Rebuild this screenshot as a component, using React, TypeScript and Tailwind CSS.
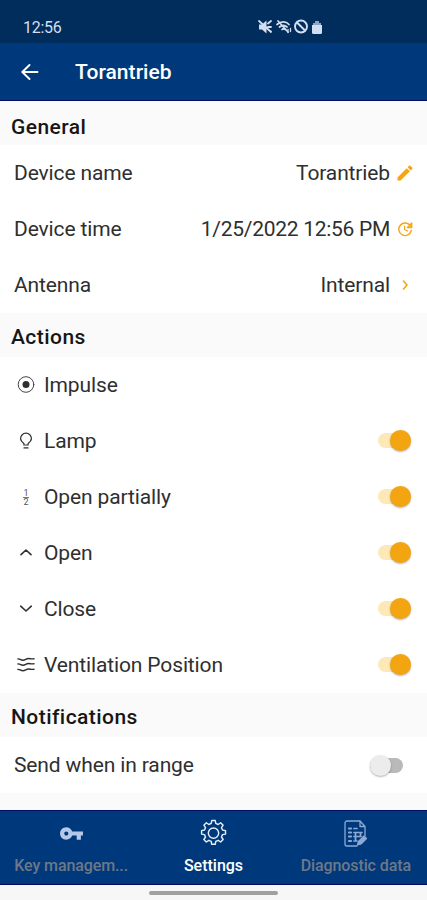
import type { ReactNode } from 'react'
import { clsx } from 'clsx'

const iconProps = {
  fill: 'none',
  stroke: 'currentColor',
  strokeLinecap: 'round' as const,
  strokeLinejoin: 'round' as const,
}

const actions = [
  {
    label: 'Impulse',
    hasSwitch: false,
    icon: (
      <svg width="18" height="18" viewBox="0 0 18 18" {...iconProps} strokeWidth="0.9">
        <circle cx="9" cy="8.500" r="7.800" />
        <circle cx="9" cy="8.500" r="3.500" fill="currentColor" stroke="none" />
      </svg>
    ),
  },
  {
    label: 'Lamp',
    hasSwitch: true,
    icon: (
      <svg width="18" height="18" viewBox="0 0 18 18" {...iconProps} strokeWidth="1.200">
        <path d="M6.900 13v-1.600C4.800 10 3.600 8.600 3.600 6.600a5.400 5.400 0 0 1 10.800 0c0 2-1.200 3.400-3.300 4.800V13Z" />
        <path d="M7 15.900h4" />
      </svg>
    ),
  },
  {
    label: 'Open partially',
    hasSwitch: true,
    icon: (
      <span className="flex flex-col items-center text-[9px] leading-[8px] text-[#555]">
        <span>1</span>
        <span className="h-px w-[6px] bg-[#777]" />
        <span>2</span>
      </span>
    ),
  },
  {
    label: 'Open',
    hasSwitch: true,
    icon: (
      <svg width="18" height="18" viewBox="0 0 18 18" {...iconProps} strokeWidth="1.600">
        <path d="m4 10.700 5-4.700 5 4.700" />
      </svg>
    ),
  },
  {
    label: 'Close',
    hasSwitch: true,
    icon: (
      <svg width="18" height="18" viewBox="0 0 18 18" {...iconProps} strokeWidth="1.600">
        <path d="m3.700 6.200 5.300 4.800 5.300-4.800" />
      </svg>
    ),
  },
  {
    label: 'Ventilation Position',
    hasSwitch: true,
    icon: (
      <svg width="18" height="18" viewBox="0 0 18 18" {...iconProps} strokeWidth="1.400">
        <path d="M1 3c1.500-.6 2.500 1.300 5 1.300 2.500 0 3-1.800 5.500-1.800 2 0 2.500.6 5.500.3" />
        <path d="M1 8c1.500-.6 2.500 1.300 5 1.300 2.500 0 3-1.800 5.500-1.800 2 0 2.500.6 5.500.3" />
        <path d="M1 13.500c1.500-.6 2.500 1.300 5 1.300 2.500 0 3-1.800 5.500-1.800 2 0 2.500.6 5.500.3" />
      </svg>
    ),
  },
]

const tabs = [
  {
    label: 'Key managem...',
    active: false,
    icon: (
      <svg width="25" height="25" viewBox="0 0 24 24" fill="#b4c8e8">
        <path d="M12.650 10C11.830 7.670 9.610 6 7 6c-3.310 0-6 2.690-6 6s2.690 6 6 6c2.610 0 4.830-1.670 5.650-4H17v4h4v-4h2v-4H12.650zM7 14c-1.100 0-2-.9-2-2s.9-2 2-2 2 .9 2 2-.9 2-2 2z" />
      </svg>
    ),
  },
  {
    label: 'Settings',
    active: true,
    icon: (
      <svg width="29" height="29" viewBox="0 0 28 28" {...iconProps} strokeWidth="1.400" className="text-[#e4edfa]">
        <path d="M11.800 4.300 12.300 1.500h3.400l.5 2.800 2.300 1 2.400-1.700 2.400 2.400-1.600 2.400 1 2.300 2.900.5v3.400l-2.900.5-1 2.300 1.600 2.400-2.400 2.400-2.400-1.600-2.300 1-.5 2.800h-3.400l-.5-2.800-2.300-1-2.400 1.600-2.400-2.400 1.600-2.400-1-2.300-2.800-.5v-3.400l2.800-.5 1-2.300L4.700 6l2.400-2.400 2.400 1.700Z" />
        <circle cx="14" cy="13.600" r="5" />
      </svg>
    ),
  },
  {
    label: 'Diagnostic data',
    active: false,
    icon: (
      <svg width="26" height="28" viewBox="0 0 26 28" {...iconProps} strokeWidth="1.300" className="text-[#8ea9d3]">
        <path d="M17 1H4a2 2 0 0 0-2 2v21a2 2 0 0 0 2 2h10M17 1l5 5.500v9M17 1v5.500h5" />
        <path d="M6 8.500h2M6 12.500h2M6 16.500h2M6 21h2" strokeWidth="2.200" />
        <path d="M11 8.500h3M11 12.500h8M11 16.500h7M11 21h3M12.500 12.500v8M17.500 12.500v4" strokeWidth="1.700" />
        <path d="m14.500 25 1-3.500L21 16l2.500 2.500L18 24Z" fill="#8ea9d3" />
      </svg>
    ),
  },
]

function SectionHeader({ title, className }: { title: string; className: string }) {
  return (
    <h2 className={clsx('flex shrink-0 items-center bg-[#fafafa] pl-[11px] text-[21px] font-medium tracking-[0.45px] text-[#161616]', className)}>
      {title}
    </h2>
  )
}

function Row({ children }: { children: ReactNode }) {
  return <div className="flex h-14 shrink-0 items-center bg-white pl-[14px] text-[21px] tracking-[-0.13px] text-[#2f2f2f]">{children}</div>
}

function ValueRow({ label, value, valueClass, icon }: { label: string; value: string; valueClass?: string; icon: ReactNode }) {
  return (
    <Row>
      <span className="pt-px">{label}</span>
      <span className={clsx('ml-auto pt-px', valueClass)}>{value}</span>
      <span className="mr-[12px] ml-[5px] flex w-5 justify-center pb-px text-[#f4a50f]">{icon}</span>
    </Row>
  )
}

function Switch({ on, label }: { on: boolean; label: string }) {
  return (
    <button
      role="switch"
      aria-checked={on}
      aria-label={label}
      className={clsx('ml-auto flex w-[33px] items-center', on ? 'mr-[16px] mb-[2px]' : 'mr-[24px]')}
    >
      <span className={clsx('flex h-[15px] w-[33px] items-center rounded-full', on ? 'justify-end bg-[#fde9b8]' : 'justify-start bg-[#b9b9b9]')}>
        <span className={clsx('size-[21px] shrink-0 rounded-full shadow-[0_1px_2px_rgba(0,0,0,0.3)]', on ? 'bg-[#f2a411]' : 'bg-[#ececec]')} />
      </span>
    </button>
  )
}

export default function App() {
  return (
    <div className="flex h-[900px] w-[427px] flex-col overflow-hidden bg-[#fafafa] font-[Roboto,sans-serif]">
      {/* Status bar */}
      <div className="flex h-[43px] shrink-0 items-center bg-[#002d5c] pt-[11px] pl-[23px] text-[#d3def0]">
        <span className="w-[235px] pt-px text-[16px] tracking-[-0.3px]">12:56</span>
        <svg width="66" height="16" viewBox="0 0 66 16" {...iconProps}>
          <path d="M1 5.500h3l4.500-4v13L4 10.500H1Z" fill="currentColor" stroke="none" />
          <path d="m1 2 12 11M10 4.500l3-2.500M10 8h3M10.500 11l2.500 1.500" strokeWidth="1.800" />
          <path d="M19 5.500c4-3.500 9-3.500 12 0M21.500 8c2.500-2 5-2 7.500 0M24 10.500c1-1 2-1 3 0M20 2l10 11" strokeWidth="1.700" />
          <path d="M30 10.500v3M32.500 9.500v3" strokeWidth="1.300" />
          <circle cx="43" cy="7.500" r="6" strokeWidth="1.900" />
          <path d="m39 3.500 8 8" strokeWidth="1.900" />
          <path d="M57 2h4v2h2v2h-8V4h2Z" fill="#8da3c0" stroke="none" />
          <path d="M54 6h10v7.500a1.500 1.500 0 0 1-1.500 1.500h-7a1.500 1.500 0 0 1-1.500-1.500Z" fill="currentColor" stroke="none" />
        </svg>
      </div>

      {/* App bar */}
      <header className="flex h-[58px] shrink-0 items-center border-b border-[#000d66] bg-[#00397b] pl-[21px] text-white">
        <svg width="18" height="18" viewBox="0 0 18 18" {...iconProps} strokeWidth="1.900">
          <path d="M16.500 9h-15M8.500 2 1.300 9l7.200 7" />
        </svg>
        <h1 className="ml-[36px] pt-[3px] text-[21px] font-medium tracking-[0.05px]">Torantrieb</h1>
      </header>

      <SectionHeader title="General" className="h-[44px] pt-[10px]" />
      <ValueRow
        label="Device name"
        value="Torantrieb"
        icon={
          <svg width="22" height="22" viewBox="0 0 24 24" fill="currentColor">
            <path d="M3 17.250V21h3.750L17.810 9.940l-3.750-3.750L3 17.250zM20.710 7.040c.39-.39.39-1.020 0-1.410l-2.340-2.340c-.39-.39-1.020-.39-1.410 0l-1.830 1.830 3.750 3.750 1.830-1.830z" />
          </svg>
        }
      />
      <ValueRow
        label="Device time"
        value="1/25/2022 12:56 PM"
        valueClass="tracking-[-0.28px]"
        icon={
          <svg width="16" height="16" viewBox="0 0 16 16" {...iconProps} strokeWidth="1.400">
            <path d="M13.500 5A6.300 6.300 0 1 0 14.300 9.500M14.700 2v4.500H10.500Z" />
            <path d="M7.500 5v3.500l3 1.500" strokeWidth="1.200" />
          </svg>
        }
      />
      <ValueRow
        label="Antenna"
        value="Internal"
        icon={
          <svg width="8" height="10" viewBox="0 0 8 10" {...iconProps} strokeWidth="1.600">
            <path d="m2.500 1 3.500 4-3.500 4" />
          </svg>
        }
      />

      <SectionHeader title="Actions" className="h-[44px] pt-[6px]" />
      {actions.map((action) => (
        <Row key={action.label}>
          <span className="ml-[3px] flex w-[18px] justify-center">{action.icon}</span>
          <span className="ml-[9px] pt-px">{action.label}</span>
          {action.hasSwitch && <Switch on label={action.label} />}
        </Row>
      ))}

      <SectionHeader title="Notifications" className="h-[44px] pt-[6px]" />
      <Row>
        <span className="pt-[2px]">Send when in range</span>
        <Switch on={false} label="Send when in range" />
      </Row>

      {/* Bottom navigation */}
      <nav className="mt-auto grid h-[75px] shrink-0 grid-cols-3 border-y border-[#000d66] bg-[#00397b]">
        {tabs.map((tab) => (
          <div key={tab.label} className="flex flex-col items-center pt-[8px]">
            <span className="flex h-[29px] items-center">{tab.icon}</span>
            <span
              className={clsx(
                'mt-[7px] text-[16px] leading-[22px] font-medium whitespace-nowrap',
                tab.active ? 'text-white' : 'tracking-[-0.1px] text-[#6c7889]'
              )}
            >
              {tab.label}
            </span>
          </div>
        ))}
      </nav>
      <div className="flex h-[15px] shrink-0 justify-center bg-[#f7f7f7] pt-[6px]">
        <span className="h-[4px] w-[129px] rounded-full bg-[#a0a0a0]" />
      </div>
    </div>
  )
}
